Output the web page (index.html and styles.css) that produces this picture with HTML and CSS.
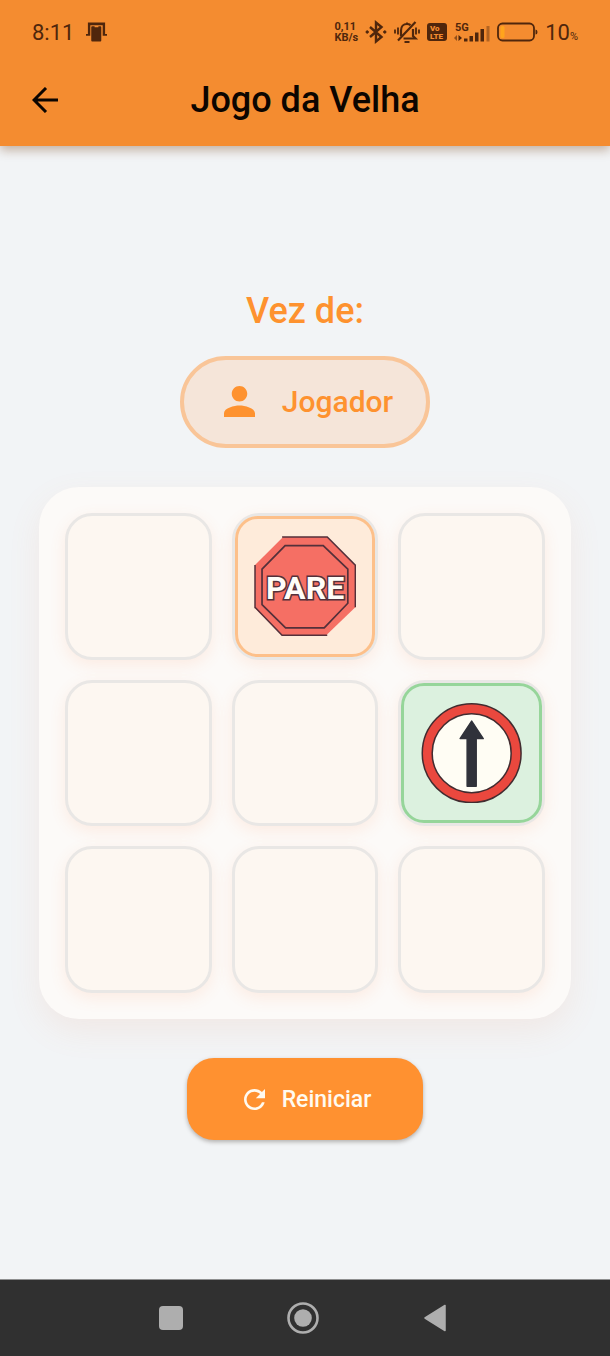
FILE: index.html
```html
<!DOCTYPE html>
<html lang="pt-BR">
<head>
<meta charset="utf-8">
<meta name="viewport" content="width=device-width, initial-scale=1">
<title>Jogo da Velha</title>
<link rel="stylesheet" href="styles.css">
</head>
<body>
<div class="app">
  <header class="header">
    <div class="status">
      <div class="status-left">
        <span class="clock">8:11</span>
        <svg class="i-cast" viewBox="0 0 22 20" fill="currentColor"><path d="M2 0h18v12h-2.500V3H4.500v9H2z"/><path d="M0 12h4.500v2H0zM17.500 12H22v2h-4.500z"/><path d="M6.500 4h2.500v1h4V4h2q1 0 1 1v14q0 1-1 1h-8.500q-1 0-1-1V5q0-1 1-1z"/></svg>
      </div>
      <div class="status-right">
        <span class="speed"><span>0,11</span><span>KB/s</span></span>
        <svg class="i-bt" viewBox="0 0 22 24" fill="none" stroke="currentColor" stroke-width="2.400"><path d="M5 7l11.500 10L11 21.500v-19l5.500 4.500L5 17"/><circle cx="2.200" cy="12" r="1.200" fill="currentColor" stroke-width="1"/><circle cx="19.800" cy="12" r="1.200" fill="currentColor" stroke-width="1"/></svg>
        <svg class="i-bell" viewBox="0 0 26 24" fill="none" stroke="currentColor" stroke-width="2.200"><path d="M7 16V10.500C7 6.500 9.500 4 13 4c1.500 0 2.500.400 3.500 1.200M19 9v7l2.500 2.500H9.500M4 20.500L21.500 2"/><path d="M10.500 22h5M13 4V2.500M1 9.500v4M4 7.500v7M25 9.500v4M22 7.500v7" stroke-width="1.800"/></svg>
        <svg class="i-lte" viewBox="0 0 20 18"><rect width="20" height="18" rx="3" fill="currentColor"/><text class="lte-text" x="3" y="8">Vo</text><text class="lte-text" x="3" y="16">LTE</text></svg>
        <svg class="i-signal" viewBox="0 0 36 20" fill="currentColor"><text class="net-text" x="1" y="9">5G</text><path opacity=".6" d="M3 13v6l-3-3z"/><path d="M4.500 13l3.500 3-3.500 3zM10 16.500h3.500v3H10zM15.500 14H19v5.500h-3.500zM21 10.500h3.500v9H21zM26.500 7H30v12.500h-3.500z"/><path opacity=".4" d="M32.500 4H35.500v15.500h-3z"/></svg>
        <svg class="i-battery" viewBox="0 0 41 20"><rect x="1" y="1.500" width="36" height="17" rx="4.500" fill="none" stroke="currentColor" stroke-width="1.800"/><rect class="charge" x="3.500" y="4" width="4" height="12" rx="1.500"/><path d="M38.500 7.500q2 0 2 2.500t-2 2.500z" fill="currentColor"/></svg>
        <span class="percent">10<small>%</small></span>
      </div>
    </div>
    <div class="toolbar">
      <button class="back" type="button" aria-label="Voltar">
        <svg viewBox="0 0 26 26" fill="none" stroke="currentColor" stroke-width="3"><path d="M26 13H2.500M14 1L2 13l12 12"/></svg>
      </button>
      <h1 class="title">Jogo da Velha</h1>
    </div>
  </header>

  <main class="game">
    <h2 class="turn">Vez de:</h2>
    <div class="player">
      <svg class="i-person" viewBox="4 4 16 16" fill="currentColor"><path d="M12 12c2.210 0 4-1.790 4-4s-1.790-4-4-4-4 1.790-4 4 1.790 4 4 4zm0 2c-2.670 0-8 1.340-8 4v2h16v-2c0-2.660-5.330-4-8-4z"/></svg>
      <span>Jogador</span>
    </div>
    <div class="board">
      <button class="cell" type="button" aria-label="Casa 1"></button>
      <button class="cell" type="button" aria-label="Casa 2">
        <span class="piece piece-stop">
          <svg viewBox="0 0 102 100">
            <path d="M29 1H73L101 29V71L72 99H28L1 72V29z" fill="#f56f64"/>
            <path d="M28 1H73L101 29V71M1 71L28 99H73M1 72V29" fill="none" stroke="#54303a" stroke-width="1.500"/>
            <path d="M31 9.500H69L93.500 33V67L70 91.500H31.500L8 68.500V33z" fill="none" stroke="#54303a" stroke-width="1.700"/>
            <text class="stop-text" x="51" y="63" text-anchor="middle">PARE</text>
          </svg>
        </span>
      </button>
      <button class="cell" type="button" aria-label="Casa 3"></button>
      <button class="cell" type="button" aria-label="Casa 4"></button>
      <button class="cell" type="button" aria-label="Casa 5"></button>
      <button class="cell" type="button" aria-label="Casa 6">
        <span class="piece piece-ahead">
          <svg viewBox="0 0 102 100">
            <circle cx="50.500" cy="50" r="44.300" fill="#fffdf4" stroke="#422c30" stroke-width="11.400"/>
            <circle cx="50.500" cy="50" r="44.300" fill="none" stroke="#ea483e" stroke-width="8.400"/>
            <path d="M50.500 18L62 35.500H55V83H46V35.500H39z" fill="#30323a" stroke="#30323a" stroke-width="1.500" stroke-linejoin="round"/>
          </svg>
        </span>
      </button>
      <button class="cell" type="button" aria-label="Casa 7"></button>
      <button class="cell" type="button" aria-label="Casa 8"></button>
      <button class="cell" type="button" aria-label="Casa 9"></button>
    </div>
    <button class="restart" type="button">
      <svg class="i-refresh" viewBox="4 4 16 16" fill="currentColor"><path d="M17.650 6.350C16.200 4.900 14.210 4 12 4c-4.420 0-7.990 3.580-7.990 8s3.570 8 7.990 8c3.730 0 6.840-2.550 7.730-6h-2.080c-.820 2.330-3.040 4-5.650 4-3.310 0-6-2.690-6-6s2.690-6 6-6c1.660 0 3.140.690 4.220 1.780L13 11h7V4l-2.350 2.350z"/></svg>
      <span>Reiniciar</span>
    </button>
  </main>

  <nav class="system-nav" aria-label="Sistema">
    <button type="button" aria-label="Recentes"><svg viewBox="0 0 32 32" fill="currentColor"><rect x="4" y="4" width="24" height="24" rx="4"/></svg></button>
    <button type="button" aria-label="Início"><svg viewBox="0 0 32 32"><circle cx="16" cy="16" r="14.500" fill="none" stroke="currentColor" stroke-width="2.600"/><circle cx="16" cy="16" r="8.800" fill="currentColor"/></svg></button>
    <button type="button" aria-label="Voltar ao anterior"><svg viewBox="0 0 32 32" fill="currentColor" stroke="currentColor" stroke-width="1.500" stroke-linejoin="round"><path d="M26 3.500V28.500L6 16z"/></svg></button>
  </nav>
</div>
</body>
</html>
```
FILE: styles.css
```css
* { box-sizing: border-box; }

body {
  margin: 0;
  font-family: Roboto, "Liberation Sans", sans-serif;
  background: #f2f4f6;
}

button {
  font: inherit;
  color: inherit;
  border: 0;
  padding: 0;
  background: none;
  cursor: pointer;
}

svg { display: block; flex: none; }
h1, h2 { margin: 0; font-weight: 500; }

.app {
  min-height: 100vh;
  display: flex;
  flex-direction: column;
}

.header {
  background: #f48c30;
  box-shadow: 0 4px 10px rgba(120, 70, 30, 0.4);
  padding-bottom: 22px;
}

.status {
  display: flex;
  justify-content: space-between;
  align-items: center;
  height: 64px;
  padding: 0 32px;
  color: #4f260c;
}
.status-left, .status-right { display: flex; align-items: center; }
.status-left { gap: 12px; }
.status-right { gap: 7px; }
.clock { font-size: 22px; }
.i-cast { width: 21px; height: 20px; }
.speed {
  display: flex;
  flex-direction: column;
  font-size: 11px;
  line-height: 11px;
  font-weight: 700;
}
.i-bt { width: 22px; height: 24px; }
.i-bell { width: 26px; height: 24px; }
.i-lte { width: 20px; height: 18px; }
.i-signal { width: 36px; height: 20px; }
.i-battery { width: 41px; height: 20px; }
.charge { fill: #ffa41c; }
.lte-text { font-size: 8px; font-weight: 900; fill: #f48c30; }
.net-text { font-size: 11px; font-weight: 700; }
.percent { font-size: 22px; }
.percent small { font-size: 11px; }

.toolbar {
  display: grid;
  grid-template-columns: 28px 1fr 28px;
  align-items: center;
  height: 60px;
  padding: 0 32px;
  padding-top: 12px;
  color: #0c0500;
}
.back svg { width: 26px; height: 26px; }
.title { text-align: center; font-size: 36px; line-height: 48px; }

.game {
  flex: 1;
  display: flex;
  flex-direction: column;
  align-items: center;
  justify-content: center;
  padding: 24px 39px;
}

.turn {
  font-size: 36px;
  line-height: 52px;
  margin-bottom: 19px;
  color: #fe922f;
}

.player {
  display: flex;
  align-items: center;
  gap: 27px;
  height: 92px;
  padding: 0 33px 0 40px;
  border: 4px solid #f9c598;
  border-radius: 46px;
  background: #f5e5d9;
  color: #fe922f;
  font-size: 30px;
  font-weight: 500;
}
.i-person { width: 31px; height: 31px; }

.board {
  display: grid;
  grid-template-columns: repeat(3, 1fr);
  gap: 20px;
  width: 100%;
  max-width: 532px;
  margin: 39px 0;
  padding: 26px;
  border-radius: 40px;
  background: #fcfaf8;
  box-shadow: 0 12px 32px rgba(240, 140, 90, 0.1);
}

.cell {
  display: grid;
  aspect-ratio: 1;
  border: 3px solid #e9e7e5;
  border-radius: 27px;
  background: #fdf7f1;
  box-shadow: 0 5px 16px rgba(255, 135, 70, 0.12);
}

.piece {
  display: grid;
  place-items: center;
  border: 3px solid;
  border-radius: 23px;
}
.piece svg { width: 76%; }
.piece-stop { background: #feebda; border-color: #fdc08a; }
.piece-ahead { background: #dcf1df; border-color: #96d59a; }
.stop-text {
  font-family: "Liberation Sans Narrow", Roboto, sans-serif;
  font-size: 32px;
  font-weight: 700;
  fill: #fffdf8;
  stroke: #54303a;
  stroke-width: 3px;
  paint-order: stroke;
}

.restart {
  display: flex;
  align-items: center;
  gap: 17px;
  height: 82px;
  padding: 0 52px 0 57px;
  border-radius: 27px;
  background: #ff9130;
  color: #fffaf0;
  font-size: 23px;
  font-weight: 500;
  box-shadow: 0 2px 4px rgba(60, 50, 40, 0.35);
}
.i-refresh { width: 21px; height: 21px; }

.system-nav {
  display: flex;
  justify-content: center;
  align-items: center;
  gap: 100px;
  height: 77px;
  padding-right: 4px;
  border-top: 1px solid #8f8f90;
  background: #303030;
  color: #aeaeae;
}
.system-nav svg { width: 32px; height: 32px; }
```
